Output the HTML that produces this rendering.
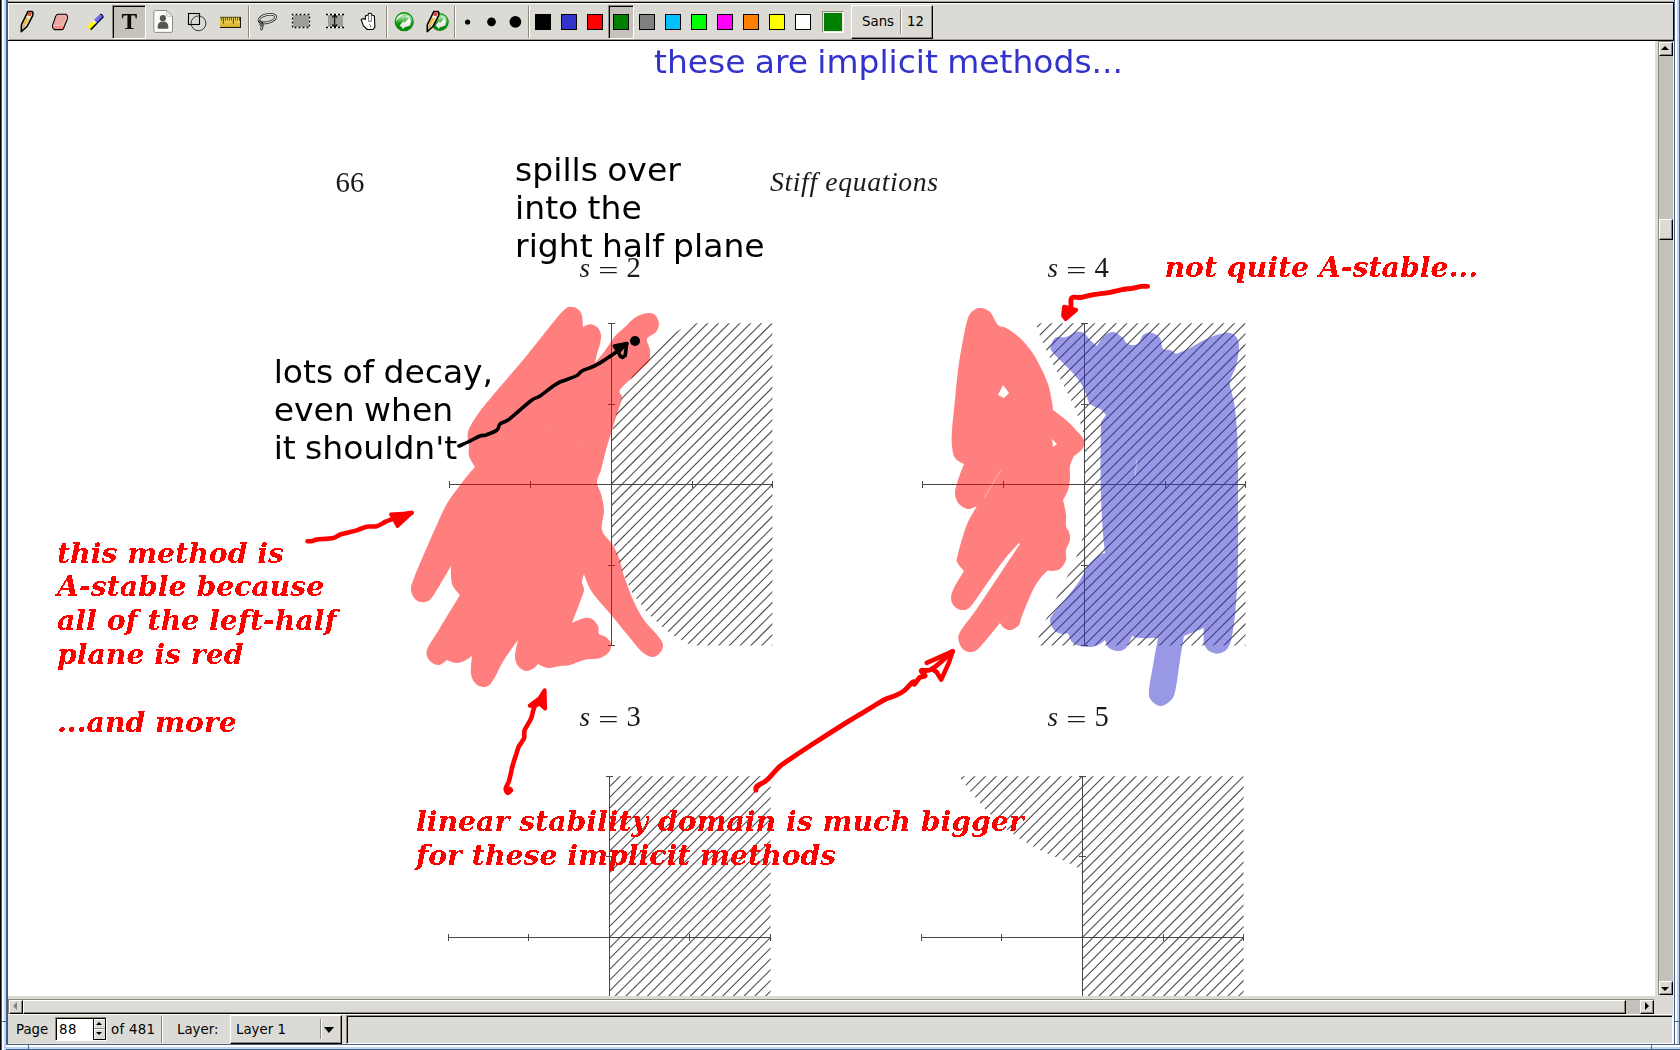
<!DOCTYPE html>
<html><head><meta charset="utf-8"><title>Xournal</title>
<style>
html,body{margin:0;padding:0}
body{width:1680px;height:1050px;overflow:hidden;position:relative;background:#dcdad5;font-family:"DejaVu Sans","Liberation Sans",sans-serif;font-size:13.33px;color:#000}
.a{position:absolute}
#canvas{left:8px;top:41px;width:1647px;height:955px;background:#fff}
#doc{position:absolute;left:0;top:0;will-change:transform}
/* window frame */
#fl{left:0;top:0;width:8px;height:1050px;background:linear-gradient(90deg,#05080c 0 1px,#3f5c87 1px 2px,#fff 2px 4px,#bdd3f1 4px 5px,#c2d8f5 5px 6px,#46618b 6px 7px,#3b5980 7px 8px)}
#fr{left:1673px;top:0;width:7px;height:1050px;background:linear-gradient(90deg,transparent 0 1px,#46618b 1px 2px,#fff 2px 4px,#bdd3f1 4px 5px,#c2d8f5 5px 6px,#3f5c87 6px 7px)}
#fb{left:6px;top:1044px;width:1674px;height:6px;background:linear-gradient(180deg,#46618b 0 1px,#fff 1px 3px,#bdd3f1 3px 4px,#c2d8f5 4px 5px,#3b5980 5px 6px)}
/* toolbar */
#tb{left:8px;top:0;width:1665px;height:41px;background:linear-gradient(180deg,#e2e1dc 0 1px,#a9a59c 1px 2px,#000 2px 3px,#fff 3px 4px,#dcdad5 4px 39px,#a29e95 39px 40px,#000 40px 41px)}
#tbl{left:8px;top:3px;width:1px;height:37px;background:#fff}
#tbr{left:1673px;top:2px;width:1px;height:39px;background:#000}
.sep{position:absolute;top:6px;width:2px;height:32px;background:linear-gradient(90deg,#8d897f 0 1px,#fff 1px 2px)}
.pressed{position:absolute;background:#c4c2bb;box-sizing:border-box;border:1px solid;border-color:#8d897f #fff #fff #8d897f;box-shadow:inset 1px 1px 0 #000}
.raised{position:absolute;background:#dcdad5;box-sizing:border-box;border:1px solid;border-color:#fff #000 #000 #fff;box-shadow:inset -1px -1px 0 #8d897f}
.sw{position:absolute;top:14px;width:16px;height:16px;box-sizing:border-box;border:1px solid #000}
/* scrollbars */
.trough{position:absolute;background:#c3c1ba;box-sizing:border-box}
#vs{left:1658px;top:41px;width:15px;height:954px;border-left:1px solid #8d897f;border-top:1px solid #8d897f}
#hs{left:8px;top:999px;width:1646px;height:15px;border-left:1px solid #8d897f;border-top:1px solid #8d897f}
.tri{position:absolute;width:0;height:0;border:solid transparent}
/* status */
#st{left:8px;top:1014px;width:1665px;height:30px;background:linear-gradient(180deg,#fff 0 1px,#dcdad5 1px 29px,#e6e3db 29px 30px)}
.lbl{position:absolute;top:1022px;line-height:16px;white-space:pre}
</style></head><body>
<div class="a" id="tb"></div><div class="a" id="tbl"></div><div class="a" id="tbr"></div>
<div class="a" id="canvas"></div>
<svg id="doc" width="1680" height="1050" viewBox="0 0 1680 1050">
<defs>
<clipPath id="h2"><path d="M772.4 323.2L772.4 645.6L697 645.6L688 643.7L681.1 639.7L674.3 635.7L668 631.5L661.7 626.6L656.6 621.4L650.9 616.3L645.7 610.6L641.1 604.3L636.3 598.6L632 592.3L628.6 584.9L625.1 577.4L621.1 570L618.9 562.6L616 554.6L613.7 545.4L612 536L612 432.8L613.7 423.4L616 414.2L618.9 406.2L621.1 398.8L625.1 391.4L628.6 383.9L632 376.5L636.3 370.2L641.1 364.5L645.7 358.2L650.9 352.5L656.6 347.4L661.7 342.2L668 337.3L674.3 333.1L681.1 329.1L688 325.1L697 323.2Z"/></clipPath>
<clipPath id="h4"><path d="M1036 323.2L1040 336L1048 354L1058 374L1066 390L1074 406L1080 422L1084.5 438L1084.5 531L1080 547L1074 563L1066 579L1058 595L1048 615L1040 633L1036 645.6L1245.5 645.6L1245.5 323.2Z"/></clipPath>
<clipPath id="h3"><path d="M609.6 776.3L770.6 776.3L770.6 996L609.6 996Z"/></clipPath>
<clipPath id="h5"><path d="M959 776.3L1243.6 776.3L1243.6 996L1082.5 996L1082.5 874.6L1077 867L1065.4 861.3L1041.7 851L1018.1 837.7L1000.4 824.4L985.6 809.6L970.9 791.9Z"/></clipPath>
<clipPath id="cv"><rect x="8" y="41" width="1647" height="955"/></clipPath>
<filter id="bin" x="-2%" y="-10%" width="104%" height="120%"><feComponentTransfer><feFuncA type="discrete" tableValues="0 1"/></feComponentTransfer></filter>
</defs>
<g clip-path="url(#cv)">
<g fill="none" stroke="#505050" stroke-width="1.12">
<path clip-path="url(#h2)" d="M611 323.2L612 322.2M611 333.9L622.7 322.2M611 344.7L633.5 322.2M611 355.4L644.2 322.2M611 366.2L655 322.2M611 376.9L665.7 322.2M611 387.7L676.5 322.2M611 398.4L687.2 322.2M611 409.2L698 322.2M611 419.9L708.7 322.2M611 430.7L719.5 322.2M611 441.4L730.2 322.2M611 452.2L741 322.2M611 462.9L751.7 322.2M611 473.7L762.5 322.2M611 484.4L773.2 322.2M611 495.2L773.4 332.8M611 505.9L773.4 343.5M611 516.7L773.4 354.3M611 527.4L773.4 365M611 538.2L773.4 375.8M611 548.9L773.4 386.5M611 559.7L773.4 397.3M611 570.4L773.4 408M611 581.2L773.4 418.8M611 591.9L773.4 429.5M611 602.7L773.4 440.3M611 613.4L773.4 451M611 624.2L773.4 461.8M611 634.9L773.4 472.5M611 645.7L773.4 483.3M620.8 646.6L773.4 494M631.6 646.6L773.4 504.8M642.3 646.6L773.4 515.5M653.1 646.6L773.4 526.3M663.8 646.6L773.4 537M674.6 646.6L773.4 547.8M685.3 646.6L773.4 558.5M696.1 646.6L773.4 569.3M706.8 646.6L773.4 580M717.6 646.6L773.4 590.8M728.3 646.6L773.4 601.5M739.1 646.6L773.4 612.3M749.8 646.6L773.4 623M760.6 646.6L773.4 633.8M771.3 646.6L773.4 644.5"/>
<path clip-path="url(#h4)" d="M1035 329.2L1042 322.2M1035 339.9L1052.7 322.2M1035 350.7L1063.5 322.2M1035 361.4L1074.2 322.2M1035 372.2L1085 322.2M1035 382.9L1095.7 322.2M1035 393.7L1106.5 322.2M1035 404.4L1117.2 322.2M1035 415.2L1128 322.2M1035 425.9L1138.7 322.2M1035 436.7L1149.5 322.2M1035 447.4L1160.2 322.2M1035 458.2L1171 322.2M1035 468.9L1181.7 322.2M1035 479.7L1192.5 322.2M1035 490.4L1203.2 322.2M1035 501.2L1214 322.2M1035 511.9L1224.7 322.2M1035 522.7L1235.5 322.2M1035 533.4L1246.2 322.2M1035 544.2L1246.5 332.7M1035 554.9L1246.5 343.4M1035 565.7L1246.5 354.2M1035 576.4L1246.5 364.9M1035 587.2L1246.5 375.7M1035 597.9L1246.5 386.4M1035 608.7L1246.5 397.2M1035 619.4L1246.5 407.9M1035 630.2L1246.5 418.7M1035 640.9L1246.5 429.4M1040.1 646.6L1246.5 440.2M1050.8 646.6L1246.5 450.9M1061.6 646.6L1246.5 461.7M1072.3 646.6L1246.5 472.4M1083.1 646.6L1246.5 483.2M1093.8 646.6L1246.5 493.9M1104.6 646.6L1246.5 504.7M1115.3 646.6L1246.5 515.4M1126.1 646.6L1246.5 526.2M1136.8 646.6L1246.5 536.9M1147.6 646.6L1246.5 547.7M1158.3 646.6L1246.5 558.4M1169.1 646.6L1246.5 569.2M1179.8 646.6L1246.5 579.9M1190.6 646.6L1246.5 590.7M1201.3 646.6L1246.5 601.4M1212.1 646.6L1246.5 612.2M1222.8 646.6L1246.5 622.9M1233.6 646.6L1246.5 633.7M1244.3 646.6L1246.5 644.4"/>
<path clip-path="url(#h3)" d="M608.6 776.9L610.2 775.3M608.6 787.6L621 775.3M608.6 798.4L631.7 775.3M608.6 809.1L642.5 775.3M608.6 819.9L653.2 775.3M608.6 830.6L664 775.3M608.6 841.4L674.7 775.3M608.6 852.1L685.5 775.3M608.6 862.9L696.2 775.3M608.6 873.6L707 775.3M608.6 884.4L717.7 775.3M608.6 895.1L728.5 775.3M608.6 905.9L739.2 775.3M608.6 916.6L750 775.3M608.6 927.4L760.7 775.3M608.6 938.1L771.5 775.3M608.6 948.9L771.6 785.9M608.6 959.6L771.6 796.6M608.6 970.4L771.6 807.4M608.6 981.1L771.6 818.1M608.6 991.9L771.6 828.9M614.2 997L771.6 839.6M625 997L771.6 850.4M635.8 997L771.6 861.1M646.5 997L771.6 871.9M657.2 997L771.6 882.6M668 997L771.6 893.4M678.8 997L771.6 904.1M689.5 997L771.6 914.9M700.2 997L771.6 925.6M711 997L771.6 936.4M721.8 997L771.6 947.1M732.5 997L771.6 957.9M743.2 997L771.6 968.6M754 997L771.6 979.4M764.8 997L771.6 990.1"/>
<path clip-path="url(#h5)" d="M958 782.3L965 775.3M958 793L975.8 775.3M958 803.8L986.5 775.3M958 814.5L997.2 775.3M958 825.3L1008 775.3M958 836L1018.8 775.3M958 846.8L1029.5 775.3M958 857.5L1040.2 775.3M958 868.3L1051 775.3M958 879L1061.8 775.3M958 889.8L1072.5 775.3M958 900.5L1083.2 775.3M958 911.3L1094 775.3M958 922L1104.8 775.3M958 932.8L1115.5 775.3M958 943.5L1126.2 775.3M958 954.3L1137 775.3M958 965L1147.8 775.3M958 975.8L1158.5 775.3M958 986.5L1169.2 775.3M958.3 997L1180 775.3M969 997L1190.8 775.3M979.8 997L1201.5 775.3M990.5 997L1212.2 775.3M1001.3 997L1223 775.3M1012 997L1233.8 775.3M1022.8 997L1244.5 775.3M1033.5 997L1244.6 786M1044.3 997L1244.6 796.7M1055.1 997L1244.6 807.5M1065.8 997L1244.6 818.2M1076.6 997L1244.6 829M1087.3 997L1244.6 839.7M1098.1 997L1244.6 850.5M1108.8 997L1244.6 861.2M1119.6 997L1244.6 872M1130.3 997L1244.6 882.7M1141.1 997L1244.6 893.5M1151.8 997L1244.6 904.2M1162.6 997L1244.6 915M1173.3 997L1244.6 925.7M1184.1 997L1244.6 936.5M1194.8 997L1244.6 947.2M1205.6 997L1244.6 958M1216.3 997L1244.6 968.7M1227.1 997L1244.6 979.5M1237.8 997L1244.6 990.2"/>
</g>
<g fill="none" stroke="#484848" stroke-width="1">
<path d="M449.5 484.5H772.5M611.5 323.3V645.6M449.5 481V488M530.5 481V488M692.5 481V488M772.5 481V488M608 323.5H615M608 404.5H615M608 565.5H615M608 645.5H615"/>
<path d="M922.5 484.5H1245.5M1084.5 323.3V645.6M922.5 481V488M1003.5 481V488M1165.5 481V488M1245.5 481V488M1081 323.5H1088M1081 404.5H1088M1081 565.5H1088M1081 645.5H1088"/>
<path d="M448.5 937.5H770.5M609.5 776.3V1000M448.5 934V941M528.5 934V941M689.5 934V941M770.5 934V941M606 776.5H613M606 856.5H613"/>
<path d="M921.5 937.5H1243.5M1082.5 776.3V1000M921.5 934V941M1001.5 934V941M1163.5 934V941M1243.5 934V941M1079 776.5H1086M1079 856.5H1086"/>
</g>
<g fill="#1a1a1a" font-family="'Liberation Serif','DejaVu Serif',serif">
<text x="335.6" y="191.8" font-size="28.8">66</text>
<text x="770" y="190.8" font-size="27.7" font-style="italic" textLength="168" lengthAdjust="spacing">Stiff equations</text>
<text y="277.2" font-size="27"><tspan x="579.5" font-style="italic">s</tspan><tspan x="626.6" font-size="28.6">2</tspan></text><text font-size="25" transform="translate(598.3 278.9) scale(1.435 1)">=</text>
<text y="277.2" font-size="27"><tspan x="1047.5" font-style="italic">s</tspan><tspan x="1094.6" font-size="28.6">4</tspan></text><text font-size="25" transform="translate(1066.3 278.9) scale(1.435 1)">=</text>
<text y="726.2" font-size="27"><tspan x="579.5" font-style="italic">s</tspan><tspan x="626.6" font-size="28.6">3</tspan></text><text font-size="25" transform="translate(598.3 728) scale(1.435 1)">=</text>
<text y="726.2" font-size="27"><tspan x="1047.5" font-style="italic">s</tspan><tspan x="1094.6" font-size="28.6">5</tspan></text><text font-size="25" transform="translate(1066.3 728) scale(1.435 1)">=</text>
</g>
<g opacity="0.5">
<path fill="#f00" d="M572 307C574.8 306.7 577.3 308.5 579 310C580.7 311.5 581.3 313.2 582 316C582.7 318.8 583 327 583 327C583 327 585.5 325.4 587 325C588.5 324.6 590.2 324 592 324.5C593.8 325 596.5 326.2 598 328C599.5 329.8 600.7 332.3 601 335C601.3 337.7 600.7 340.8 600 344C599.3 347.2 597.8 350.8 597 354C596.2 357.2 595 363 595 363C595 363 601.2 355.7 604 352C606.8 348.3 609.5 343.8 611.5 341C613.5 338.2 613.9 337.2 616 335C618.1 332.8 621.3 330.5 624 328C626.7 325.5 629.3 322.2 632 320C634.7 317.8 637 316.2 640 315C643 313.8 647.3 312.8 650 313C652.7 313.2 654.5 314.2 656 316C657.5 317.8 659 321.3 659 324C659 326.7 658 329.5 656 332C654 334.5 648 336 647 339C646 342 649.7 346.3 650 350C650.3 353.7 650.3 358 649 361C647.7 364 644.5 365.5 642 368C639.5 370.5 637.7 372.3 634 376C630.3 379.7 622 386.3 620 390C618 393.7 622.5 394 622 398C621.5 402 618.7 408.7 617 414C615.3 419.3 613.8 424 612 430C610.2 436 607.8 443.3 606 450C604.2 456.7 602.5 464.7 601 470C599.5 475.3 597 478 597 482C597 486 599.8 489.3 601 494C602.2 498.7 603.8 504 604 510C604.2 516 600.7 524.3 602 530C603.3 535.7 609.2 539.3 612 544C614.8 548.7 617 552.7 619 558C621 563.3 621.5 568.7 624 576C626.5 583.3 630.7 594.7 634 602C637.3 609.3 640 614.3 644 620C648 625.7 654.8 631.8 658 636C661.2 640.2 662.7 642.2 663 645C663.3 647.8 661.8 651 660 653C658.2 655 655 657.2 652 657C649 656.8 645.7 655.2 642 652C638.3 648.8 635 644 630 638C625 632 618.3 623.7 612 616C605.7 608.3 596.7 599 592 592C587.3 585 584 574 584 574C584 574 582 579.3 582 582C582 584.7 584.3 586.7 584 590C583.7 593.3 582 596.5 580 602C578 607.5 572 623 572 623C572 623 580.7 618.7 584 618C587.3 617.3 589.7 617.7 592 619C594.3 620.3 596.8 623.5 598 626C599.2 628.5 597.7 632.2 599 634C600.3 635.8 604 635.3 606 637C608 638.7 610.5 641.5 611 644C611.5 646.5 610.8 649.7 609 652C607.2 654.3 604.2 656.7 600 658C595.8 659.3 589 658.8 584 660C579 661.2 574 664 570 665C566 666 563.7 665.5 560 666C556.3 666.5 551.7 668.3 548 668C544.3 667.7 538 664 538 664C538 664 536 666.8 534 668C532 669.2 528.7 671.3 526 671C523.3 670.7 519.8 668.5 518 666C516.2 663.5 515 660.3 515 656C515 651.7 518 640 518 640C518 640 508.3 653 504 660C499.7 667 495.3 677.5 492 682C488.7 686.5 486.7 686.7 484 687C481.3 687.3 478.2 686.2 476 684C473.8 681.8 471.7 678.7 471 674C470.3 669.3 472 656 472 656C472 656 466.7 659.8 464 661C461.3 662.2 458.8 663.2 456 663C453.2 662.8 447 660 447 660C447 660 441.8 664.8 439 665C436.2 665.2 432 663.5 430 661C428 658.5 425.3 655.5 427 650C428.7 644.5 434.5 637.2 440 628C445.5 618.8 460 595 460 595C460 595 453.5 588.8 452 584C450.5 579.2 451 566 451 566C451 566 437.3 590 433 596C428.7 602 427.8 601.3 425 602C422.2 602.7 418.3 602 416 600C413.7 598 411.3 593.7 411 590C410.7 586.3 411.8 584 414 578C416.2 572 419.8 563.7 424 554C428.2 544.3 435 528.7 439 520C443 511.3 443.8 508.7 448 502C452.2 495.3 459.5 485.8 464 480C468.5 474.2 475 467 475 467C475 467 470 459.5 469 456C468 452.5 469.2 450 469 446C468.8 442 466.5 437.3 468 432C469.5 426.7 473.7 420.3 478 414C482.3 407.7 485.7 404 494 394C502.3 384 516.7 367.7 528 354C539.3 340.3 554.7 319.8 562 312C569.3 304.2 569.2 307.3 572 307Z"/>
<path fill="#f00" fill-rule="evenodd" d="M981 308C983.7 308.3 987.2 309.2 990 312C992.8 314.8 995.3 322.3 998 325C1000.7 327.7 1002.3 325.8 1006 328C1009.7 330.2 1015.7 334 1020 338C1024.3 342 1028.7 347.3 1032 352C1035.3 356.7 1037.3 360.7 1040 366C1042.7 371.3 1046 378 1048 384C1050 390 1051.2 397.7 1052 402C1052.8 406.3 1053 410 1053 410C1053 410 1062.2 416.7 1066 420C1069.8 423.3 1073 426.7 1076 430C1079 433.3 1082.8 437 1084 440C1085.2 443 1084.2 445.7 1083 448C1081.8 450.3 1078.5 452.7 1077 454C1075.5 455.3 1074 456 1074 456C1074 456 1070.7 462.3 1070 466C1069.3 469.7 1070.3 474 1070 478C1069.7 482 1069.2 486.3 1068 490C1066.8 493.7 1063 500 1063 500C1063 500 1065.5 509.7 1066 514C1066.5 518.3 1065.5 523 1066 526C1066.5 529 1068.3 529.7 1069 532C1069.7 534.3 1070.5 537 1070 540C1069.5 543 1066.7 546.7 1066 550C1065.3 553.3 1067 556.8 1066 560C1065 563.2 1062.3 567.2 1060 569C1057.7 570.8 1054.3 570.5 1052 571C1049.7 571.5 1049 569.2 1046 572C1043 574.8 1038 580.7 1034 588C1030 595.3 1024.5 609.8 1022 616C1019.5 622.2 1020.8 622.7 1019 625C1017.2 627.3 1013.5 629.5 1011 630C1008.5 630.5 1005.8 629.2 1004 628C1002.2 626.8 1000 623 1000 623C1000 623 984.7 642.2 980 647C975.3 651.8 974.7 651.5 972 652C969.3 652.5 966.2 651.7 964 650C961.8 648.3 959.7 645 959 642C958.3 639 957.2 637.3 960 632C962.8 626.7 970 618.7 976 610C982 601.3 988.7 591 996 580C1003.3 569 1020 544 1020 544C1020 544 1019 543 1019 543C1019 543 1009.2 553.5 1004 560C998.8 566.5 993.5 574.3 988 582C982.5 589.7 975.3 601.3 971 606C966.7 610.7 964.8 610 962 610C959.2 610 955.8 608 954 606C952.2 604 951 601 951 598C951 595 951.8 592.5 954 588C956.2 583.5 964 571 964 571C964 571 958 564.8 957 562C956 559.2 957 558.3 958 554C959 549.7 961.3 541.3 963 536C964.7 530.7 965.7 527 968 522C970.3 517 977 506 977 506C977 506 971 509.3 968 509C965 508.7 961.2 506.5 959 504C956.8 501.5 955.2 498 955 494C954.8 490 956.5 485 958 480C959.5 475 964 464 964 464C964 464 957 461 955 458C953 455 952.5 450.7 952 446C951.5 441.3 951.5 437.7 952 430C952.5 422.3 954 410 955 400C956 390 956.7 380 958 370C959.3 360 961.3 348.7 963 340C964.7 331.3 966.2 323 968 318C969.8 313 971.8 311.7 974 310C976.2 308.3 978.3 307.7 981 308ZM1003 385L1009 393L1004 398L998 395ZM1052 439L1057 444L1053 447Z"/>
<path fill="#3333cc" d="M1051 345C1051.5 343.2 1052.8 340.3 1054 339C1055.2 337.7 1056 337.3 1058 337C1060 336.7 1063 337.8 1066 337C1069 336.2 1073 332.7 1076 332C1079 331.3 1081.7 331.7 1084 333C1086.3 334.3 1087.8 337.8 1090 340C1092.2 342.2 1097 346 1097 346C1097 346 1101.3 338.3 1104 336C1106.7 333.7 1110 331.8 1113 332C1116 332.2 1119.5 335 1122 337C1124.5 339 1125.3 342.8 1128 344C1130.7 345.2 1135.5 345.5 1138 344C1140.5 342.5 1140.8 336.9 1143 335C1145.2 333.1 1148.2 332 1151 332.5C1153.8 333 1158 335.2 1160 338C1162 340.8 1161.3 347 1163 349C1164.7 351 1167.8 349.2 1170 350C1172.2 350.8 1176 354 1176 354C1176 354 1185.3 350.3 1190 348C1194.7 345.7 1199 342.3 1204 340C1209 337.7 1215.7 335.2 1220 334C1224.3 332.8 1227.2 332.3 1230 333C1232.8 333.7 1235.5 335.5 1237 338C1238.5 340.5 1239.2 343.3 1239 348C1238.8 352.7 1237.5 360.2 1236 366C1234.5 371.8 1230.3 377 1230 383C1229.7 389 1232.8 394.2 1234 402C1235.2 409.8 1236.3 418.7 1237 430C1237.7 441.3 1237.8 458.3 1238 470C1238.2 481.7 1238 485 1238 500C1238 515 1238.3 542.7 1238 560C1237.7 577.3 1237 591.3 1236 604C1235 616.7 1233.5 628.5 1232 636C1230.5 643.5 1229.3 646.1 1227 649C1224.7 651.9 1221 653.3 1218 653.6C1215 653.9 1211.4 652.6 1209 651C1206.6 649.4 1203.6 644 1203.6 644C1203.6 644 1203.6 628 1203.6 628C1203.6 628 1197.3 630.7 1194 632C1190.7 633.3 1184 636 1184 636C1184 636 1181.5 650.7 1180 660C1178.5 669.3 1176.8 685 1175 692C1173.2 699 1171.5 699.7 1169 702C1166.5 704.3 1163 706.3 1160 706C1157 705.7 1152.8 702.7 1151 700C1149.2 697.3 1148.5 696.7 1149 690C1149.5 683.3 1152.5 668.7 1154 660C1155.5 651.3 1158 638 1158 638C1158 638 1144.3 638.3 1140 638C1135.7 637.7 1132 636 1132 636C1132 636 1128.3 645.5 1126 648C1123.7 650.5 1120.8 651 1118 651C1115.2 651 1111.2 649.8 1109 648C1106.8 646.2 1105 640 1105 640C1105 640 1102.2 642.8 1100 644C1097.8 645.2 1095.3 646.7 1092 647C1088.7 647.3 1083.3 646.8 1080 646C1076.7 645.2 1074 644.2 1072 642C1070 639.8 1068 633 1068 633C1068 633 1064.3 634.5 1062 634C1059.7 633.5 1056 632.3 1054 630C1052 627.7 1049.7 623.3 1050 620C1050.3 616.7 1053 614 1056 610C1059 606 1064 601 1068 596C1072 591 1076.7 585 1080 580C1083.3 575 1085 570 1088 566C1091 562 1095.2 558.2 1098 556C1100.8 553.8 1105 553 1105 553C1105 553 1104.5 549.5 1104 544C1103.5 538.5 1102.6 530.7 1102 520C1101.4 509.3 1100.8 496.3 1100.6 480C1100.4 463.7 1101 422 1101 422C1101 422 1106 415 1106 415C1106 415 1102.7 410.8 1100 409C1097.3 407.2 1092.3 406.5 1090 404C1087.7 401.5 1087.7 397.7 1086 394C1084.3 390.3 1082.7 386 1080 382C1077.3 378 1073.7 374 1070 370C1066.3 366 1061.2 361.3 1058 358C1054.8 354.7 1052.2 352.2 1051 350C1049.8 347.8 1050.5 346.8 1051 345Z"/>
</g>
<g stroke="#fff" stroke-width="0.8" opacity="0.5" fill="none"><path d="M1001 470L984 498"/><path d="M1137 460L1135 476"/><path d="M549.6 425.4L550.4 424.6M580.6 444.4L581.6 443.4"/></g>
<g fill="none" stroke="#f00" stroke-width="4.6" stroke-linecap="round" stroke-linejoin="round">
<path d="M307.5 541.2C308.3 541.2 311 541.3 312.5 541C314 540.7 313.2 540.1 316.7 539.6C320.2 539.1 329.3 538.8 333.3 537.9C337.3 537 336.9 535.5 340.8 534.2C344.7 533 352.4 531.6 356.7 530.4C361 529.1 363.4 527.4 366.7 526.7C370 526 373.5 527.1 376.7 526.2C379.9 525.4 382.5 523.2 385.8 521.7C389.1 520.2 393.2 518.8 396.7 517.5C400.2 516.2 404.2 514.5 406.7 513.8C409.2 513 410.9 513 411.7 512.9"/>
<path fill="#f00" stroke-width="3.5" d="M390.8 514.2L411.7 512.9L397.5 526.2Z"/>
<path d="M510.9 790.3C510.4 790.8 508.9 793.3 508 793C507.1 792.7 505.5 790.7 505.7 788.6C505.9 786.5 508 784.4 509.1 780.6C510.2 776.8 511.4 770.3 512.6 765.7C513.9 761.1 515.6 756.3 516.6 753.1C517.6 749.9 517.7 748.8 518.9 746.3C520.1 743.8 523 741 524 738.3C525 735.6 523.5 733.5 524.6 730.3C525.8 727.1 529.5 722.1 530.9 718.9C532.3 715.7 532.4 713.2 533.1 710.9C533.8 708.6 534.6 706.1 534.9 705.1"/>
<path fill="#f00" stroke-width="4" d="M529.7 705.7L539.4 698.3L544.6 690.3L545.1 708.6L539.5 703.5L535 706Z"/>
<path stroke-width="6" d="M508.6 790.6L509.6 789.6"/>
<path stroke-width="4.9" d="M756 790.2C756.1 789.6 755 788 756.8 786.3C758.6 784.6 763.2 783.2 766.7 780.2C770.2 777.2 774.9 771 778.1 768C781.3 765 780.6 765.5 785.7 762C790.8 758.5 798.4 753.3 808.6 746.7C818.8 740.1 836.5 728.6 846.7 722.3C856.9 715.9 863.2 712.4 869.6 708.6C876 704.8 880.5 701.7 884.8 699.5C889.1 697.3 892.2 697.1 895.5 695.6C898.8 694.1 901.7 692.6 904.6 690.3C907.5 688 911.4 682.9 913 681.9C914.6 680.9 913.4 685 914.5 684.2C915.6 683.4 918.1 678.7 919.9 677.3C921.7 675.9 925 676.9 925.2 675.8C925.5 674.7 920.3 671.6 921.4 670.5C922.5 669.4 926.8 672.2 932 669C937.2 665.8 949.2 654.3 952.6 651.4"/>
<path stroke-width="4.6" d="M952.6 651.4L926.7 662.9"/>
<path stroke-width="4.6" d="M952.6 651.4L948.8 662.9L941.2 679.6L936.6 672L932 669"/>
<path stroke-width="4.9" d="M1147.6 286.4C1146.6 286.4 1144.3 286.1 1141.7 286.4C1139.1 286.7 1135.2 287.8 1131.9 288.3C1128.6 288.8 1125.6 288.9 1122 289.6C1118.4 290.3 1114 291.6 1110.2 292.3C1106.4 293 1102.6 293.4 1099.1 293.9C1095.6 294.4 1092.3 294.9 1089.3 295.5C1086.2 296.1 1083.4 297.2 1080.8 297.5C1078.2 297.8 1075.2 296.9 1073.6 297.2C1072 297.5 1071.4 298.1 1071 299.5C1070.6 300.9 1071.2 303.8 1071 305.4C1070.8 307 1069.8 308.6 1069.6 309.3"/>
<path fill="#f00" stroke-width="4" d="M1064.1 306.7L1076.2 310L1065.7 319.1L1063.1 315.8Z"/>
</g>
<g fill="none" stroke="#000" stroke-width="3.6" stroke-linecap="round" stroke-linejoin="round">
<path d="M459 446C460.5 445.3 464.5 443.7 468 442C471.5 440.3 477 437.2 480 436C483 434.8 483.2 436 486 435C488.8 434 494.7 431.8 497 430C499.3 428.2 498.2 425.7 500 424C501.8 422.3 504.7 422.3 508 420C511.3 417.7 516 413.3 520 410C524 406.7 528.7 402.3 532 400C535.3 397.7 536.7 398.2 540 396C543.3 393.8 548.7 389.3 552 387C555.3 384.7 556 383.8 560 382C564 380.2 572.3 377.8 576 376C579.7 374.2 579.3 372.5 582 371C584.7 369.5 588.9 368.4 592 367C595.1 365.6 598 364.1 600.5 362.6C603 361.2 604.4 360.1 607.1 358.3C609.8 356.5 613.4 354.1 616.7 351.7C620 349.2 625 345 626.7 343.6"/>
<path d="M626.7 343.6L614.3 346L618.1 351.7L620.5 356.4L622.4 357.4L625.2 355.5Z"/>
<path stroke-width="3" d="M626.7 343.6L616 347.5L619 352Z" fill="#000"/>
</g>
<circle cx="635" cy="341" r="5" fill="#000"/>
<g font-family="'DejaVu Sans','Liberation Sans',sans-serif" font-size="33" word-spacing="-1.2" transform="scale(1 0.95)">
<text x="654" y="76.8" fill="#3333cc" font-size="32.95">these are implicit methods...</text>
<text fill="#000"><tspan x="515.1" y="190.5">spills over</tspan><tspan x="515.1" y="230.5">into the</tspan><tspan x="515.1" y="270.3">right half plane</tspan></text>
<text fill="#000"><tspan x="273.7" y="403.1">lots of decay,</tspan><tspan x="273.7" y="443.1">even when</tspan><tspan x="273.7" y="483.2">it shouldn't</tspan></text>
</g>
<g font-family="'DejaVu Serif','Liberation Serif',serif" font-size="28.3" font-weight="bold" font-style="italic" fill="#f00" filter="url(#bin)">
<text><tspan x="57" y="562.5">this method is</tspan><tspan x="57" y="596.4">A-stable because</tspan><tspan x="57" y="630.2">all of the left-half</tspan><tspan x="57" y="664.1">plane is red</tspan><tspan x="57" y="731.8">...and more</tspan></text>
<text x="1164.5" y="276.6">not quite A-stable...</text>
<text><tspan x="416" y="830.8">linear stability domain is much bigger</tspan><tspan x="416" y="864.6">for these implicit methods</tspan></text>
</g>
</g>
</svg>
<!-- toolbar widgets -->
<div class="pressed" style="left:112px;top:5px;width:34px;height:34px"></div>
<div class="pressed" style="left:608px;top:5px;width:26px;height:34px"></div>
<div class="sep" style="left:248px"></div><div class="sep" style="left:386px"></div><div class="sep" style="left:454px"></div><div class="sep" style="left:528px"></div>
<div class="sw" style="left:535px;background:#000"></div><div class="sw" style="left:561px;background:#3333cc"></div><div class="sw" style="left:587px;background:#f00"></div><div class="sw" style="left:613px;background:#008000"></div><div class="sw" style="left:639px;background:#808080"></div><div class="sw" style="left:665px;background:#00c0ff"></div><div class="sw" style="left:691px;background:#0f0"></div><div class="sw" style="left:717px;background:#f0f"></div><div class="sw" style="left:743px;background:#ff8000"></div><div class="sw" style="left:769px;background:#ff0"></div><div class="sw" style="left:795px;background:#fff"></div>
<div class="a" style="left:822px;top:11px;width:22px;height:22px;box-sizing:border-box;border:1px solid;border-color:#8d897f #fff #fff #8d897f;background:#008000;box-shadow:inset 0 0 0 1px #e9e7e2"></div>
<div class="raised" style="left:851px;top:5px;width:82px;height:34px"></div>
<div class="a" style="left:862px;top:14px;line-height:16px">Sans</div>
<div class="a" style="left:900px;top:9px;width:2px;height:25px;background:linear-gradient(90deg,#8d897f 0 1px,#fff 1px 2px)"></div>
<div class="a" style="left:907px;top:14px;line-height:16px">12</div>
<svg class="a" style="left:0;top:0" width="1680" height="41" viewBox="0 0 1680 41">
<defs>
<g id="pencil">
<path d="M21.3 31.6L21.4 24.9L28 11.4L32.2 11.4L33.1 13.2L32.6 15.9L27.2 26.2Z" fill="#f3ead2" stroke="#000" stroke-width="1.55" stroke-linejoin="round"/>
<path d="M28.5 12.2L32.2 12.6L30.4 16.4L27.2 15.4Z" fill="#d8452a"/>
<path d="M27.1 15.6L30.3 16.6L29.6 17.9L26.5 16.9Z" fill="#f4f4f4"/>
<path d="M26.3 17.4L29.4 18.4L25.6 25.6L23 23.9Z" fill="#e6b532"/>
<path d="M23 24.2L25.5 25.8L22.3 29.3L22.1 26.4Z" fill="#c9a878"/>
<path d="M28.2 18.6L25 25" stroke="#f6e6a0" stroke-width=".8"/>
</g>
<linearGradient id="rul" x1="0" y1="0" x2="0" y2="1"><stop offset="0" stop-color="#fbe87e"/><stop offset=".5" stop-color="#e9c94a"/><stop offset="1" stop-color="#d2ad2c"/></linearGradient>
<linearGradient id="grn" x1="0" y1="0" x2="0" y2="1"><stop offset="0" stop-color="#5cc45c"/><stop offset=".22" stop-color="#a6e0a6"/><stop offset=".62" stop-color="#0a930a"/><stop offset="1" stop-color="#068606"/></linearGradient>
<linearGradient id="wht" x1="0" y1="0" x2="0" y2="1"><stop offset="0" stop-color="#fff"/><stop offset=".45" stop-color="#fbfbfb"/><stop offset="1" stop-color="#dcd8da"/></linearGradient>
<g id="gball">
<circle cx="0" cy="0" r="9.1" fill="url(#grn)" stroke="#0d8c0d" stroke-width="1.1"/>
<path d="M0.7 -7A7.7 7.7 0 0 1 6 3.7L-0.1 5.9L-0.9 7.6L-4.5 3.5L-0.5 -0.8L0.1 1.1L4.7 -3.5Z" fill="url(#wht)"/>
<path d="M-8 -2Q-5.4 -7.8 0.9 -7.7Q-4.4 -6 -7.4 -1.2Z" fill="#fff" opacity=".95"/>
</g>
</defs>
<use href="#pencil"/>
<!-- eraser -->
<path d="M57.7 14.3H66Q67.9 15.4 67.6 18.4L63.4 28.8Q62.6 29.6 61.6 29.6H54.2Q52.2 28.6 52.4 25.6L55.8 16.2Q56.4 14.6 57.7 14.3Z" fill="#ff8b8b" stroke="#000" stroke-width="1.1" stroke-linejoin="round"/>
<path d="M57.9 14.9H65.8Q67.2 15.6 66.9 17.4L63 24.9L53.4 25.4L56.4 16.4Q56.9 15.1 57.9 14.9Z" fill="#e8aaa3"/>
<path d="M53.4 25.5L63 25L66.8 17.8" stroke="#f6cbc6" stroke-width=".8" fill="none"/>
<!-- highlighter -->
<path d="M87.2 26.4L100.1 14.1L102.9 16.8L90.6 29.6Z" fill="#ff0"/>
<path d="M93.6 20.3L100.1 14.1L102.9 16.8L96.6 23.4Z" fill="#6a6af2"/>
<path d="M92.9 20.9L93.9 20L97 23L96 24Z" fill="#fff"/>
<path d="M90.6 29.8L103.1 17L102.2 14.9L100.3 14" stroke="#06063a" stroke-width="1.3" fill="none"/>
<path d="M90.6 29.8L96.2 24" stroke="#111" stroke-width="1.3" fill="none"/>
<path d="M87.2 26.4L90.4 29.6" stroke="#ffef30" stroke-width="1"/>
<!-- T -->
<text x="121.4" y="28.9" font-family="'Liberation Serif','DejaVu Serif',serif" font-weight="bold" font-size="23" fill="#6e5f2a" opacity=".9">T</text>
<text x="121.8" y="28.9" font-family="'Liberation Serif','DejaVu Serif',serif" font-weight="bold" font-size="23" fill="#0c0a05">T</text>
<!-- image page -->
<path d="M155.3 10.5H166.6L172.5 16.3V30.9Q172.5 32.4 171 32.4H155.3Q153.8 32.4 153.8 30.9V12Q153.8 10.5 155.3 10.5Z" fill="#fbfbfa" stroke="#8b8d87" stroke-width="1"/>
<path d="M166.6 10.6V15.2Q166.6 16.3 167.8 16.3H172.4Z" fill="#eeeeec" stroke="#a6a8a2" stroke-width=".6"/>
<circle cx="162.9" cy="18.2" r="3.1" fill="#555753"/>
<path d="M157.6 27.4Q157.6 21.6 162.9 21.6Q168.4 21.6 168.4 27.4Q168.4 28.8 167 28.8H159Q157.6 28.8 157.6 27.4Z" fill="#555753"/>
<!-- shapes -->
<rect x="188.5" y="13.5" width="11" height="11" fill="none" stroke="#000" stroke-width="1.1"/>
<circle cx="198.5" cy="23.3" r="7.4" fill="none" stroke="#111" stroke-width=".8"/>
<!-- ruler -->
<rect x="220" y="17" width="21" height="11" fill="#1a1a14"/>
<rect x="220" y="17" width="20" height="10" fill="url(#rul)"/>
<path d="M221.4 17v3.6M225.3 17v3.6M227.3 17v3.6M229.4 17v3.6M231.5 17v3.6M235.5 17v3.6M237.6 17v3.6M239.5 17v3.6" stroke="#3a2c08" stroke-width=".8"/>
<path d="M223.3 17v6.6M233.4 17v6.6" stroke="#3a2c08" stroke-width=".9"/>
<rect x="220" y="16.8" width="20.4" height=".8" fill="#4a3a10"/>
<!-- lasso -->
<g fill="none" transform="rotate(-13 267.3 18.6)">
<ellipse cx="267.3" cy="18.6" rx="8.6" ry="3.9" stroke="#222" stroke-width="2.6"/>
<ellipse cx="267.3" cy="18.6" rx="8.6" ry="3.9" stroke="#f4f4f2" stroke-width="1"/>
</g>
<path d="M259.6 21.6Q262.6 22.6 262.4 25.2Q262 27.6 261.4 29.2" stroke="#222" stroke-width="2.4" fill="none" stroke-linecap="round"/>
<path d="M259.8 21.8Q262.4 22.8 262.2 25.2Q261.9 27.4 261.4 29" stroke="#e8e8e6" stroke-width=".9" fill="none" stroke-linecap="round"/>
<circle cx="261.2" cy="24.4" r="1.5" fill="#8c8c88" stroke="#222" stroke-width=".8"/>
<!-- rect select -->
<rect x="292.5" y="14.5" width="17" height="13" fill="#a09e99" stroke="#fff" stroke-width="1.2"/>
<rect x="292.5" y="14.5" width="17" height="13" fill="none" stroke="#000" stroke-width="1.3" stroke-dasharray="2 2" stroke-dashoffset="1"/>
<!-- vertical space -->
<rect x="328" y="15" width="15" height="12" fill="#a09e99"/>
<path d="M326 14.5H344M326 27.5H344" stroke="#fff" stroke-width="1.2"/>
<path d="M326 14.5H344M326 27.5H344" stroke="#000" stroke-width="1.3" stroke-dasharray="2 2"/>
<path d="M334.7 15V27M332.3 17.6L334.7 14.8L337.1 17.6M332.3 24.4L334.7 27.2L337.1 24.4" stroke="#000" stroke-width="1.1" fill="none"/>
<!-- hand -->
<path d="M361.2 19.6L363.6 18.6L365.3 19.6V15.9L367.9 14.9L368.8 13.3H371L371.8 14.9L374.4 15.9L374.9 27.2L373 29.5H367.3L363.4 25.8Z" fill="#fff" stroke="#000" stroke-width="1.1" stroke-linejoin="round"/>
<path d="M368.6 14.6V21.4H371.4V14.6" stroke="#555" stroke-width=".8" fill="none"/>
<path d="M369.3 24.2L370.4 25V27.4" stroke="#444" stroke-width=".8" fill="none"/>
<!-- green balls -->
<use href="#gball" transform="translate(404.2 21.7)"/>
<use href="#gball" transform="translate(439.8 22) scale(.93)"/>
<use href="#pencil" transform="translate(405.9 0)"/>
<!-- dots -->
<circle cx="467.6" cy="22" r="2.6" fill="#000"/><circle cx="491.5" cy="21.8" r="4.4" fill="#000"/><circle cx="515.4" cy="21.8" r="5.9" fill="#000"/>
</svg>

<!-- vertical scrollbar -->
<div class="a" style="left:1655px;top:41px;width:3px;height:955px;background:#dedcd7"></div>
<div class="trough" id="vs"></div>
<div class="raised" style="left:1659px;top:42px;width:14px;height:14px"></div><div class="tri" style="left:1661px;top:46px;border-width:0 4px 4px 4px;border-bottom-color:#000"></div>
<div class="raised" style="left:1659px;top:981px;width:14px;height:14px"></div><div class="tri" style="left:1661px;top:987px;border-width:4px 4px 0 4px;border-top-color:#000"></div>
<div class="raised" style="left:1659px;top:219px;width:14px;height:21px"></div>
<!-- horizontal scrollbar -->
<div class="a" style="left:8px;top:996px;width:1665px;height:3px;background:#dcdad5"></div>
<div class="trough" id="hs"></div>
<div class="raised" style="left:9px;top:1000px;width:14px;height:14px"></div><div class="tri" style="left:13px;top:1002px;border-width:4px 4px 4px 0;border-right-color:#84827c"></div>
<div class="raised" style="left:1640px;top:1000px;width:14px;height:14px"></div><div class="tri" style="left:1645px;top:1002px;border-width:4px 0 4px 4px;border-left-color:#000"></div>
<div class="raised" style="left:23px;top:1000px;width:1603px;height:14px"></div>
<!-- status bar -->
<div class="a" id="st"></div>
<div class="lbl" style="left:16px">Page</div>
<div class="a" style="left:55px;top:1017px;width:52px;height:24px;box-sizing:border-box;background:#fff;border:1px solid;border-color:#8d897f #fff #fff #8d897f;box-shadow:inset 1px 1px 0 #000"></div>
<div class="lbl" style="left:59px;letter-spacing:.5px">88</div>
<div class="a" style="left:93px;top:1019px;width:13px;height:21px;box-sizing:border-box;background:#dcdad5;border:solid #000;border-width:0 1px 1px 1px;box-shadow:inset 1px 0 0 #fff,inset 0 1px 0 #fff"></div>
<div class="a" style="left:94px;top:1028px;width:11px;height:2px;background:linear-gradient(180deg,#8d897f 0 1px,#fff 1px 2px)"></div>
<div class="tri" style="left:96px;top:1022px;border-width:0 3.5px 3.5px 3.5px;border-bottom-color:#000"></div>
<div class="tri" style="left:96px;top:1032px;border-width:3.5px 3.5px 0 3.5px;border-top-color:#000"></div>
<div class="lbl" style="left:111px;letter-spacing:.3px">of 481</div>
<div class="a" style="left:161px;top:1016px;width:2px;height:27px;background:linear-gradient(90deg,#8d897f 0 1px,#fff 1px 2px)"></div>
<div class="lbl" style="left:177px">Layer:</div>
<div class="raised" style="left:230px;top:1015px;width:112px;height:29px"></div>
<div class="lbl" style="left:236px">Layer 1</div>
<div class="a" style="left:320px;top:1019px;width:2px;height:20px;background:linear-gradient(90deg,#8d897f 0 1px,#fff 1px 2px)"></div>
<div class="tri" style="left:324px;top:1027px;border-width:6px 5.5px 0 5.5px;border-top-color:#000"></div>
<div class="a" style="left:346px;top:1015px;width:1327px;height:29px;box-sizing:border-box;border:1px solid;border-color:#8d897f #fff #fff #8d897f;box-shadow:inset 1px 1px 0 #000"></div>
<!-- frame -->
<div class="a" style="left:1673px;top:41px;width:1px;height:1003px;background:#f2f1ee"></div><div class="a" id="fl"></div><div class="a" id="fr"></div><div class="a" id="fb"></div>
<div class="a" style="left:2px;top:1021px;width:6px;height:1px;background:#46618b"></div><div class="a" style="left:1674px;top:1021px;width:6px;height:1px;background:#46618b"></div>
<div class="a" style="left:28px;top:1044px;width:1px;height:6px;background:#46618b"></div><div class="a" style="left:1651px;top:1044px;width:1px;height:6px;background:#46618b"></div>
</body></html>
